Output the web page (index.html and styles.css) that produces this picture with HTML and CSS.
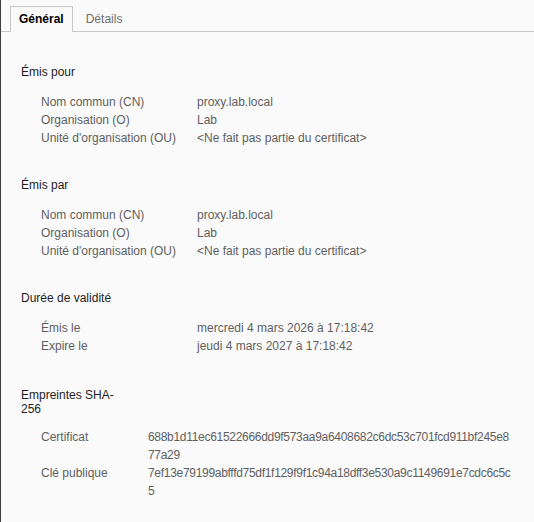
FILE: index.html
```html
<!DOCTYPE html>
<html lang="fr">
<head>
<meta charset="utf-8">
<title>Certificat</title>
<link rel="stylesheet" href="styles.css">
</head>
<body>
<div class="dialog">
  <div class="tabs">
    <div class="tab tab-active">Général</div>
    <div class="tab">Détails</div>
  </div>
  <div class="content">
    <section class="section">
      <h2 class="heading">Émis pour</h2>
      <div class="rows">
        <div class="label">Nom commun (CN)</div><div class="value">proxy.lab.local</div>
        <div class="label">Organisation (O)</div><div class="value">Lab</div>
        <div class="label">Unité d'organisation (OU)</div><div class="value">&lt;Ne fait pas partie du certificat&gt;</div>
      </div>
    </section>
    <section class="section">
      <h2 class="heading">Émis par</h2>
      <div class="rows">
        <div class="label">Nom commun (CN)</div><div class="value">proxy.lab.local</div>
        <div class="label">Organisation (O)</div><div class="value">Lab</div>
        <div class="label">Unité d'organisation (OU)</div><div class="value">&lt;Ne fait pas partie du certificat&gt;</div>
      </div>
    </section>
    <section class="section">
      <h2 class="heading">Durée de validité</h2>
      <div class="rows">
        <div class="label">Émis le</div><div class="value">mercredi 4 mars 2026 à 17:18:42</div>
        <div class="label">Expire le</div><div class="value">jeudi 4 mars 2027 à 17:18:42</div>
      </div>
    </section>
    <section class="section section-sha">
      <h2 class="heading heading-wrap">Empreintes SHA-<wbr>256</h2>
      <div class="rows rows-hash">
        <div class="label">Certificat</div><div class="value hash">688b1d11ec61522666dd9f573aa9a6408682c6dc53c701fcd911bf245e8<br>77a29</div>
        <div class="label">Clé publique</div><div class="value hash">7ef13e79199abfffd75df1f129f9f1c94a18dff3e530a9c1149691e7cdc6c5c<br>5</div>
      </div>
    </section>
  </div>
</div>
</body>
</html>
```

FILE: styles.css
```css
html, body {
  margin: 0;
  padding: 0;
  background: #fafafa;
}

body {
  font-family: "Liberation Sans", Arial, sans-serif;
  font-size: 12px;
  color: #1e1e1e;
}

.dialog {
  min-height: 100vh;
  box-sizing: border-box;
  border-left: 1px solid #3e3e3e;
}

.tabs {
  display: flex;
  align-items: flex-end;
  padding: 6px 0 0 9px;
  border-bottom: 1px solid #c8c8c8;
}

.tab {
  height: 24px;
  line-height: 24px;
  padding: 0 12px 1px;
  border: 1px solid transparent;
  border-bottom: none;
  margin-bottom: -1px;
  color: #6e6e6e;
}

.tab-active {
  padding: 0 8px 1px;
  border-color: #c8c8c8;
  background: #fafafa;
  color: #000;
  font-weight: bold;
}

.content {
  padding: 31px 16px 0 20px;
}

.section {
  margin-bottom: 29px;
}

.heading {
  margin: 0;
  font-size: 12px;
  font-weight: normal;
  line-height: 18px;
  color: #1e1e1e;
}

.rows {
  display: grid;
  grid-template-columns: 156px 1fr;
  margin-top: 12px;
  padding-left: 20px;
  line-height: 18px;
  color: #5f5f5f;
}

.section-sha {
  margin-top: 33px;
}

.heading-wrap {
  width: 96px;
  line-height: 14px;
}

.rows-hash {
  grid-template-columns: 107px 1fr;
  margin-top: 12px;
}

.hash {
  white-space: nowrap;
  letter-spacing: -0.3px;
}
```
